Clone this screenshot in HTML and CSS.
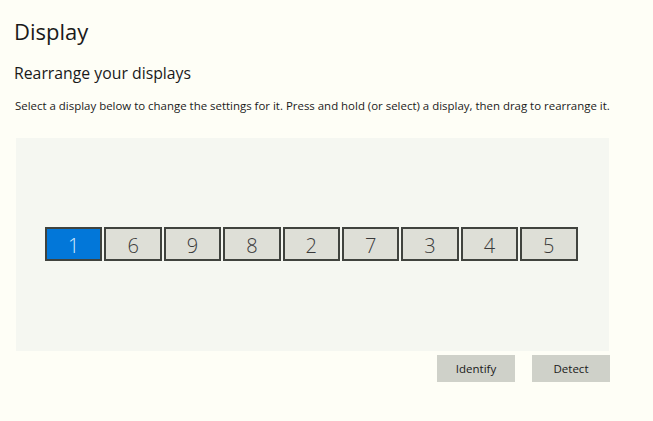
FILE: index.html
```html
<!DOCTYPE html>
<html>
<head>
<meta charset="utf-8">
<link rel="stylesheet" href="styles.css">
</head>
<body>
<div class="page">
  <h1 class="title">Display</h1>
  <h2 class="subtitle">Rearrange your displays</h2>
  <p class="desc">Select a display below to change the settings for it. Press and hold (or select) a display, then drag to rearrange it.</p>
  <div class="canvas">
    <div class="monitors">
      <div class="mon active">1</div>
      <div class="mon">6</div>
      <div class="mon">9</div>
      <div class="mon">8</div>
      <div class="mon">2</div>
      <div class="mon">7</div>
      <div class="mon">3</div>
      <div class="mon">4</div>
      <div class="mon">5</div>
    </div>
  </div>
  <div class="actions">
    <button class="btn">Identify</button>
    <button class="btn">Detect</button>
  </div>
</div>
</body>
</html>
```

FILE: styles.css
```css
html, body {
  margin: 0;
  padding: 0;
  background: #fefef6;
}
body {
  font-family: "Open Sans", "Noto Sans", sans-serif;
  color: #1a1a1a;
}
.page {
  padding: 16px 0 0 16px;
  width: 594px;
}
.title {
  margin: 0 0 0 -2px;
  font-size: 22px;
  font-weight: 400;
  line-height: 30px;
}
.subtitle {
  margin: 17px 0 0 -2px;
  font-size: 15.8px;
  font-weight: 400;
  line-height: 20px;
}
.desc {
  margin: 16px 0 0 -1px;
  font-size: 11.45px;
  line-height: 14px;
  white-space: nowrap;
}
.canvas {
  margin-top: 25px;
  height: 213px;
  width: 593px;
  background: #f5f7f1;
  display: flex;
  flex-direction: column;
  justify-content: flex-start;
}
.monitors {
  display: flex;
  gap: 2px;
  margin: 89px 0 0 29px;
}
.mon {
  box-sizing: border-box;
  width: 57.4px;
  height: 34px;
  border: 2px solid #40433e;
  background: #dedfd7;
  color: #3a3a3a;
  font-size: 20px;
  font-weight: 300;
  line-height: 30px;
  padding-top: 2px;
  text-align: center;
}
.mon.active {
  background: #0277d9;
  color: #d9ecff;
}
.actions {
  display: flex;
  justify-content: flex-end;
  gap: 17px;
  margin-top: 4px;
}
.btn {
  width: 78px;
  height: 27px;
  border: none;
  background: #cfd1c9;
  font-family: inherit;
  font-size: 11.5px;
  color: #1a1a1a;
  padding: 0;
}
```
